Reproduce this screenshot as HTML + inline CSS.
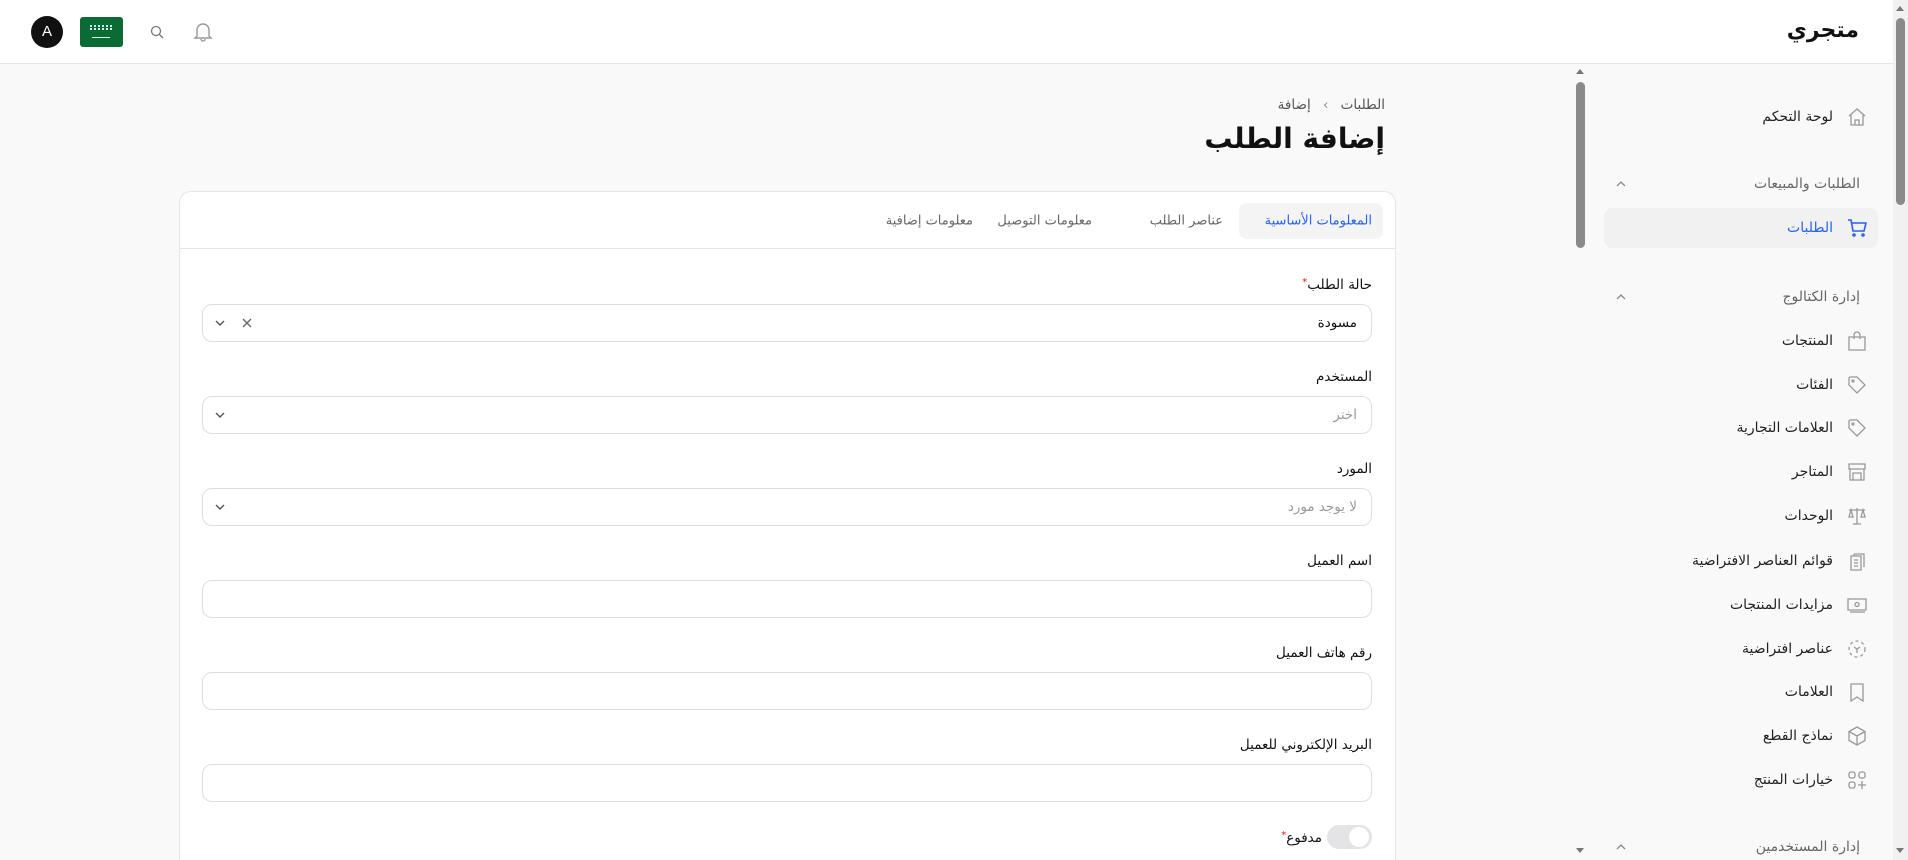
<!DOCTYPE html>
<html lang="ar" dir="rtl" style="overflow:hidden;width:1908px;height:860px"><head><meta charset="utf-8">
<style>
*{box-sizing:border-box;margin:0;padding:0}
body{width:1908px;height:860px;overflow:hidden;background:#f9f9f9;font-family:"DejaVu Sans","Liberation Sans",sans-serif;color:#111;position:relative}
.a{position:absolute}
.hdr{left:0;top:0;width:1893px;height:64px;background:#fff;border-bottom:1px solid #e5e5e5}
.side{left:1588px;top:64px;width:305px;height:796px;background:#f9f9f9}
.item{position:absolute;right:75px;font-size:14px;color:#222;white-space:nowrap;transform:translateY(-50%)}
.ico{position:absolute;left:1847px;width:20px;height:20px;transform:translateY(-50%)}
.sec{position:absolute;right:48px;font-size:14px;color:#666;transform:translateY(-50%)}
.chev{position:absolute;left:1615px;transform:translateY(-50%)}
.card{left:179px;top:191px;width:1217px;height:700px;background:#fff;border:1px solid #e5e5e5;border-radius:12px}
.lbl{position:absolute;right:536px;font-size:13.5px;color:#111;transform:translateY(-50%);white-space:nowrap}
.inp{position:absolute;left:202px;width:1170px;height:38px;background:#fff;border:1px solid #dedede;border-radius:10px}
.ph{position:absolute;right:14px;top:50%;transform:translateY(-50%);font-size:13.5px}
.tab{position:absolute;top:221px;transform:translateY(-50%);font-size:13px;color:#666;white-space:nowrap}
svg{display:block}
</style></head><body>
<div class="a hdr"></div>
<div class="a" style="right:49px;top:18px;font-size:22px;font-weight:bold">متجري</div>
<div class="a" style="left:31px;top:16px;width:32px;height:32px;border-radius:50%;background:#111;color:#fff;font-size:15px;line-height:32px;text-align:center;font-family:'Liberation Sans'">A</div>
<div class="a" style="left:80px;top:17px;width:43px;height:30px;border-radius:3px;background:#0b6b34">
<div class="a" style="left:10px;top:8px;width:22px;height:5px;border-top:2px dotted #cfe;border-bottom:2px dotted #cfe"></div>
<div class="a" style="left:12px;top:20px;width:18px;height:1px;background:#dfe"></div></div>
<svg class="a" style="left:149px;top:24px" width="16" height="16" viewBox="0 0 16 16" fill="none" stroke="#777" stroke-width="1.3"><circle cx="7" cy="7" r="4.5"/><path d="M10.5 10.5L14 14"/></svg>
<svg class="a" style="left:193px;top:21px" width="20" height="22" viewBox="0 0 20 22" fill="none" stroke="#999" stroke-width="1.4"><path d="M4 15V9a6 6 0 0112 0v6l2 2H2z"/><path d="M8 18a2 2 0 004 0"/></svg>

<div class="a side"></div>
<div class="a" style="left:1893px;top:0;width:15px;height:860px;background:#f1f1f1"></div>
<div class="a" style="left:1896px;top:18px;width:9px;height:187px;border-radius:5px;background:#8a8a8a"></div>
<div class="a" style="left:1896px;top:6px;border:4px solid transparent;border-bottom:5px solid #777;border-top:0"></div>
<div class="a" style="left:1896px;top:848px;border:4px solid transparent;border-top:5px solid #777;border-bottom:0"></div>
<div class="a" style="left:1573px;top:64px;width:15px;height:796px;background:#f9f9f9"></div>
<div class="a" style="left:1576px;top:82px;width:9px;height:166px;border-radius:5px;background:#8a8a8a"></div>
<div class="a" style="left:1576px;top:69px;border:4px solid transparent;border-bottom:5px solid #777;border-top:0"></div>
<div class="a" style="left:1576px;top:848px;border:4px solid transparent;border-top:5px solid #777;border-bottom:0"></div>

<div class="a" style="left:1604px;top:208px;width:274px;height:40px;border-radius:8px;background:#f1f1f1"></div>
<div class="item" style="top:117px">لوحة التحكم</div>
<svg class="ico" style="top:117px" viewBox="0 0 20 20" fill="none" stroke="#999" stroke-width="1.3"><path d="M2 9L10 2l8 7M4 8v10h12V8M8 18v-5h4v5"/></svg>
<div class="sec" style="top:184px">الطلبات والمبيعات</div>
<svg class="chev" style="top:184px" width="12" height="8" viewBox="0 0 12 8" fill="none" stroke="#888" stroke-width="1.3"><path d="M2 6l4-4 4 4"/></svg>
<div class="item" style="top:228px;color:#2563eb">الطلبات</div>
<svg class="ico" style="top:228px" viewBox="0 0 20 20" fill="none" stroke="#2563eb" stroke-width="1.6"><path d="M1 2h3l2 11h11l2-8H5"/><circle cx="7" cy="17" r="1"/><circle cx="16" cy="17" r="1"/></svg>
<div class="sec" style="top:297px">إدارة الكتالوج</div>
<svg class="chev" style="top:297px" width="12" height="8" viewBox="0 0 12 8" fill="none" stroke="#888" stroke-width="1.3"><path d="M2 6l4-4 4 4"/></svg>
<div class="item" style="top:341px">المنتجات</div>
<svg class="ico" style="top:341px" viewBox="0 0 20 20" fill="none" stroke="#999" stroke-width="1.3"><path d="M2 6h16v13H2zM7 8V4a3 3 0 016 0v4"/></svg>
<div class="item" style="top:385px">الفئات</div>
<svg class="ico" style="top:385px" viewBox="0 0 20 20" fill="none" stroke="#999" stroke-width="1.3"><path d="M2 3l1-1h7l8 8-8 8-8-8V3z"/><circle cx="6" cy="6" r="1"/></svg>
<div class="item" style="top:428px">العلامات التجارية</div>
<svg class="ico" style="top:428px" viewBox="0 0 20 20" fill="none" stroke="#999" stroke-width="1.3"><path d="M2 3l1-1h7l8 8-8 8-8-8V3z"/><circle cx="6" cy="6" r="1"/></svg>
<div class="item" style="top:472px">المتاجر</div>
<svg class="ico" style="top:472px" viewBox="0 0 20 20" fill="none" stroke="#999" stroke-width="1.3"><path d="M2 2h16v5H2zM3 7v11h14V7M6 11h8v7H6z"/></svg>
<div class="item" style="top:516px">الوحدات</div>
<svg class="ico" style="top:516px" viewBox="0 0 20 20" fill="none" stroke="#999" stroke-width="1.3"><path d="M10 2v16M6 18h8M2 4h16M4 4l-2 7h4zM16 4l-2 7h4z"/></svg>
<div class="item" style="top:561px">قوائم العناصر الافتراضية</div>
<svg class="ico" style="top:561px" viewBox="0 0 20 20" fill="none" stroke="#999" stroke-width="1.3"><path d="M4 5h10v14H4zM7 3h10v13M7 3v2M7 9h4M7 12h4M7 15h4"/></svg>
<div class="item" style="top:605px">مزايدات المنتجات</div>
<svg class="ico" style="top:605px" viewBox="0 0 20 20" fill="none" stroke="#999" stroke-width="1.3"><path d="M1 4h18v11H1zM3 17h15"/><circle cx="10" cy="9.5" r="2"/></svg>
<div class="item" style="top:649px">عناصر افتراضية</div>
<svg class="ico" style="top:649px" viewBox="0 0 20 20" fill="none" stroke="#999" stroke-width="1.3" stroke-dasharray="3 3"><circle cx="10" cy="10" r="8"/><path d="M7 8l3 2 3-2M10 10v4" stroke-dasharray="none"/></svg>
<div class="item" style="top:692px">العلامات</div>
<svg class="ico" style="top:692px" viewBox="0 0 20 20" fill="none" stroke="#999" stroke-width="1.3"><path d="M4 2h12v17l-6-4-6 4z"/></svg>
<div class="item" style="top:736px">نماذج القطع</div>
<svg class="ico" style="top:736px" viewBox="0 0 20 20" fill="none" stroke="#999" stroke-width="1.3"><path d="M10 1l8 4.5v9L10 19l-8-4.5v-9zM2 5.5l8 4.5 8-4.5M10 10v9"/></svg>
<div class="item" style="top:780px">خيارات المنتج</div>
<svg class="ico" style="top:780px" viewBox="0 0 20 20" fill="none" stroke="#999" stroke-width="1.3"><rect x="2" y="2" width="6" height="6" rx="2"/><rect x="12" y="2" width="6" height="6" rx="2"/><rect x="2" y="12" width="6" height="6" rx="2"/><path d="M15 11v8M11 15h8"/></svg>
<div class="sec" style="top:847px">إدارة المستخدمين</div>
<svg class="chev" style="top:847px" width="12" height="8" viewBox="0 0 12 8" fill="none" stroke="#888" stroke-width="1.3"><path d="M2 6l4-4 4 4"/></svg>

<div class="a" style="right:523px;top:97px;font-size:13.5px;color:#555;white-space:nowrap">الطلبات <span style="color:#888;margin:0 8px">&rsaquo;</span> إضافة</div>
<div class="a" style="right:523px;top:122px;font-size:28px;font-weight:bold;white-space:nowrap">إضافة الطلب</div>

<div class="a card"></div>
<div class="a" style="left:180px;top:248px;width:1215px;height:1px;background:#e5e5e5"></div>
<div class="a" style="left:1239px;top:203px;width:144px;height:36px;border-radius:8px;background:#f4f4f5"></div>
<div class="tab" style="right:536px;color:#2563eb">المعلومات الأساسية</div>
<div class="tab" style="right:685px">عناصر الطلب</div>
<div class="tab" style="right:816px">معلومات التوصيل</div>
<div class="tab" style="right:935px">معلومات إضافية</div>

<div class="lbl" style="top:285px">حالة الطلب<span style="color:#e11;font-size:10px;vertical-align:top">*</span></div>
<div class="inp" style="top:304px"><span class="ph">مسودة</span>
<svg class="a" style="left:12px;top:15px" width="10" height="7" viewBox="0 0 10 7" fill="none" stroke="#555" stroke-width="1.4"><path d="M1 1l4 4 4-4"/></svg>
<svg class="a" style="left:39px;top:13px" width="10" height="10" viewBox="0 0 10 10" fill="none" stroke="#666" stroke-width="1.4"><path d="M1 1l8 8M9 1l-8 8"/></svg></div>

<div class="lbl" style="top:377px">المستخدم</div>
<div class="inp" style="top:396px"><span class="ph" style="color:#999">اختر</span>
<svg class="a" style="left:12px;top:15px" width="10" height="7" viewBox="0 0 10 7" fill="none" stroke="#555" stroke-width="1.4"><path d="M1 1l4 4 4-4"/></svg></div>

<div class="lbl" style="top:469px">المورد</div>
<div class="inp" style="top:488px"><span class="ph" style="color:#999">لا يوجد مورد</span>
<svg class="a" style="left:12px;top:15px" width="10" height="7" viewBox="0 0 10 7" fill="none" stroke="#555" stroke-width="1.4"><path d="M1 1l4 4 4-4"/></svg></div>

<div class="lbl" style="top:561px">اسم العميل</div>
<div class="inp" style="top:580px"></div>
<div class="lbl" style="top:653px">رقم هاتف العميل</div>
<div class="inp" style="top:672px"></div>
<div class="lbl" style="top:745px">البريد الإلكتروني للعميل</div>
<div class="inp" style="top:764px"></div>

<div class="a" style="left:1327px;top:825px;width:45px;height:24px;border-radius:12px;background:#e4e4e7"><div class="a" style="left:22px;top:2px;width:20px;height:20px;border-radius:50%;background:#fff"></div></div>
<div class="lbl" style="top:838px;right:586px">مدفوع<span style="color:#e11;font-size:10px;vertical-align:top">*</span></div>
</body></html>
